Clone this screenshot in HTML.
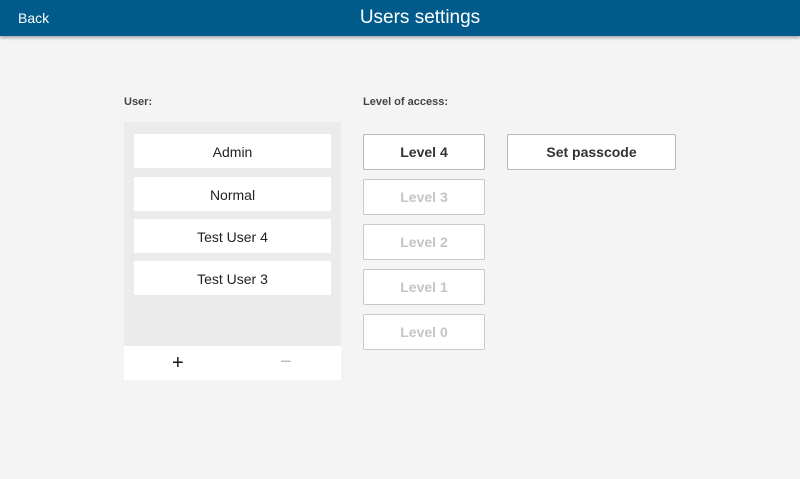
<!DOCTYPE html>
<html><head><style>
*{margin:0;padding:0;box-sizing:border-box}
body{width:800px;height:479px;background:#f4f4f4;font-family:"Liberation Sans",sans-serif;position:relative;overflow:hidden}
.hdr{position:absolute;left:0;top:0;width:800px;height:36px;background:#005a8c;box-shadow:0 2px 3px rgba(0,0,0,.3)}
.back{position:absolute;left:18px;top:10px;color:#fff;font-size:14px}
.title{position:absolute;left:0;width:840px;text-align:center;top:7px;color:#fff;font-size:19px}
.lbl{position:absolute;top:96px;font-size:11px;font-weight:bold;color:#444}
.panel{position:absolute;left:124px;top:122px;width:217px;height:224px;background:#ebebeb}
.foot{position:absolute;left:124px;top:346px;width:217px;height:34px;background:#fff}
.it{position:absolute;left:134px;width:197px;height:34px;background:#fff;text-align:center;line-height:36px;font-size:14px;color:#222}
.b{position:absolute;left:363px;width:122px;height:36px;background:#fff;border:1px solid #c8c8c8;border-radius:2px;text-align:center;line-height:34px;font-size:14px;color:#c4c4c4;font-weight:bold}
</style></head><body>
<div class="hdr"><div class="back">Back</div><div class="title">Users settings</div></div>
<div class="lbl" style="left:124px">User:</div>
<div class="lbl" style="left:363px">Level of access:</div>
<div class="panel"></div>
<div class="it" style="top:134px">Admin</div>
<div class="it" style="top:177px">Normal</div>
<div class="it" style="top:219px">Test User 4</div>
<div class="it" style="top:261px">Test User 3</div>
<div class="foot"><span style="position:absolute;left:48px;top:6px;font-size:20px;color:#111">+</span><span style="position:absolute;left:156px;top:5px;font-size:20px;color:#bbb">−</span></div>
<div class="b" style="top:134px;color:#333;border-color:#b8b8b8">Level 4</div>
<div class="b" style="top:179px">Level 3</div>
<div class="b" style="top:224px">Level 2</div>
<div class="b" style="top:269px">Level 1</div>
<div class="b" style="top:314px">Level 0</div>
<div class="b" style="top:134px;left:507px;width:169px;color:#333;border-color:#b8b8b8">Set passcode</div>
</body></html>
